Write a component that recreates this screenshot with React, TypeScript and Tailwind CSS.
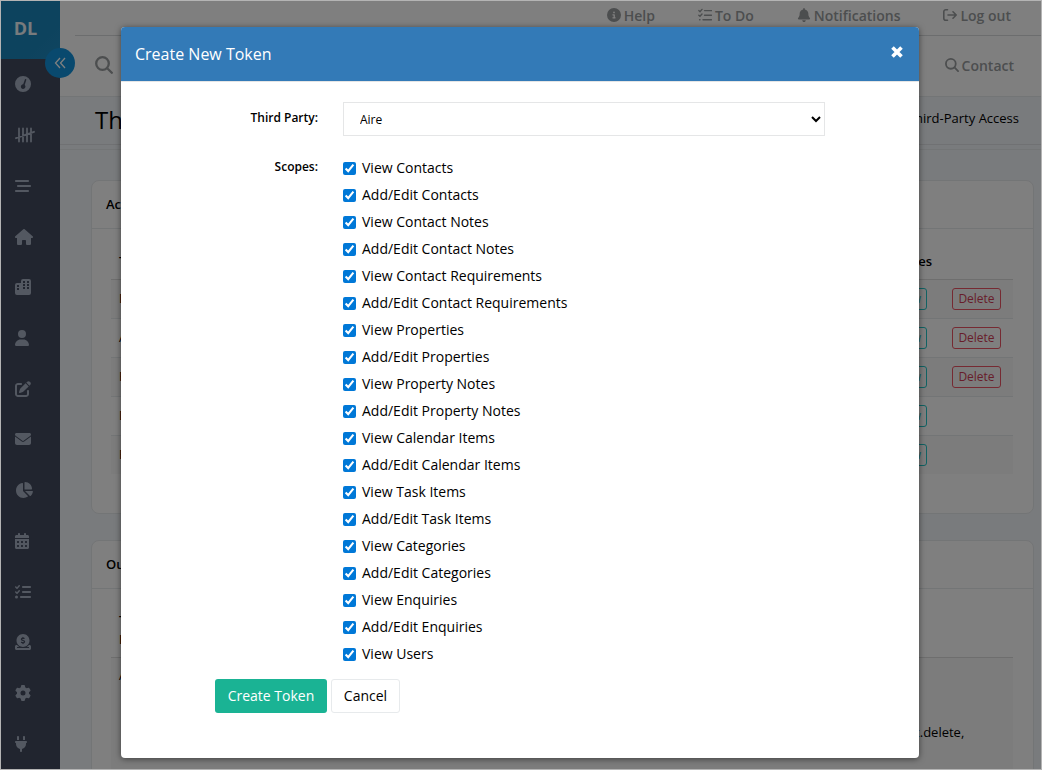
import type { ReactNode } from 'react'
import {
  FaBarsStaggered,
  FaBell,
  FaCalendarDays,
  FaChartPie,
  FaCircleDollarToSlot,
  FaCircleInfo,
  FaEnvelope,
  FaGear,
  FaHouse,
  FaListCheck,
  FaPenToSquare,
  FaPlug,
  FaUser,
} from 'react-icons/fa6'

const scopes = [
  'View Contacts',
  'Add/Edit Contacts',
  'View Contact Notes',
  'Add/Edit Contact Notes',
  'View Contact Requirements',
  'Add/Edit Contact Requirements',
  'View Properties',
  'Add/Edit Properties',
  'View Property Notes',
  'Add/Edit Property Notes',
  'View Calendar Items',
  'Add/Edit Calendar Items',
  'View Task Items',
  'Add/Edit Task Items',
  'View Categories',
  'Add/Edit Categories',
  'View Enquiries',
  'Add/Edit Enquiries',
  'View Users',
]

const tokens = [
  { name: 'Domain', removable: true },
  { name: 'Aire', removable: true },
  { name: 'Reapit', removable: true },
  { name: 'Domus', removable: false },
  { name: 'Ree', removable: false },
]

function GaugeIcon() {
  return (
    <svg viewBox="0 0 16 16" fill="currentColor" className="size-4" aria-hidden="true">
      <path
        fillRule="evenodd"
        d="M8 0a8 8 0 1 1 0 16A8 8 0 0 1 8 0Zm2.9 3.1a.8.8 0 0 0-1 .4L8.2 8.3a2.3 2.3 0 1 0 1.5.6l1.6-4.8a.8.8 0 0 0-.4-1Z"
      />
    </svg>
  )
}

function TallyIcon() {
  return (
    <svg
      viewBox="0 0 20 16"
      fill="none"
      stroke="currentColor"
      strokeWidth="1.8"
      strokeLinecap="round"
      className="h-4 w-5"
      aria-hidden="true"
    >
      <path d="M4 1.5v13M8 1.5v13M12 1.5v13M16 1.5v13M1 11.2l18-6.4" />
    </svg>
  )
}

function BuildingsIcon() {
  return (
    <svg viewBox="0 0 16 16" fill="currentColor" className="size-4" aria-hidden="true">
      <path
        fillRule="evenodd"
        d="M6 2a2 2 0 0 1 2-2h6a2 2 0 0 1 2 2v12a2 2 0 0 1-2 2H2a2 2 0 0 1-2-2V6a2 2 0 0 1 2-2h4ZM8 2v2h2V2Zm4 0v2h2V2ZM8 5v2h2V5Zm4 0v2h2V5ZM2 6v2h2V6Zm6 2v2h2V8Zm4 0v2h2V8ZM2 9v2h2V9Z"
      />
    </svg>
  )
}

function SearchIcon({ className }: { className: string }) {
  return (
    <svg
      viewBox="0 0 18 18"
      fill="none"
      stroke="currentColor"
      strokeWidth="2.3"
      strokeLinecap="round"
      className={className}
      aria-hidden="true"
    >
      <circle cx="7.5" cy="7.5" r="6.3" />
      <path d="m12.2 12.2 4.6 4.6" />
    </svg>
  )
}

function ChecklistIcon() {
  return (
    <svg
      viewBox="0 0 14 14"
      fill="none"
      stroke="currentColor"
      strokeWidth="1.4"
      strokeLinecap="round"
      className="size-3.5"
      aria-hidden="true"
    >
      <path d="m.8 2.6 1.2 1.1L4 1.4M.8 7.2 2 8.3 4 6M6.5 2.6h7M6.5 7.2h7M5 11.8h8.5M1.6 11.8h.4" />
    </svg>
  )
}

function LogoutIcon() {
  return (
    <svg
      viewBox="0 0 14 14"
      fill="none"
      stroke="currentColor"
      strokeWidth="1.6"
      strokeLinecap="round"
      strokeLinejoin="round"
      className="size-3.5"
      aria-hidden="true"
    >
      <path d="M4.5 1.7H2.8a2 2 0 0 0-2 2v6.6a2 2 0 0 0 2 2h1.7M5 7h8.2M10 3.8 13.2 7 10 10.2" />
    </svg>
  )
}

const menu = [
  { label: 'Dashboard', icon: <GaugeIcon /> },
  { label: 'Tally', icon: <TallyIcon /> },
  { label: 'Lists', icon: <FaBarsStaggered /> },
  { label: 'Home', icon: <FaHouse className="w-[18px]" /> },
  { label: 'Properties', icon: <BuildingsIcon /> },
  { label: 'Contacts', icon: <FaUser className="w-3.5" /> },
  { label: 'Edit', icon: <FaPenToSquare /> },
  { label: 'Mail', icon: <FaEnvelope /> },
  { label: 'Reports', icon: <FaChartPie className="w-[18px]" /> },
  { label: 'Calendar', icon: <FaCalendarDays className="w-3.5" /> },
  { label: 'Tasks', icon: <FaListCheck /> },
  { label: 'Payments', icon: <FaCircleDollarToSlot /> },
  { label: 'Settings', icon: <FaGear /> },
  { label: 'Integrations', icon: <FaPlug className="w-3" /> },
]

function Sidebar() {
  return (
    <aside className="relative flex w-[59px] shrink-0 flex-col bg-[#424a5e]">
      <div className="flex h-[58px] shrink-0 items-center bg-linear-to-br from-[#1b87bd] from-70% to-[#2089c0] pr-2.5 pb-1">
        <a href="#home" className="w-full text-center text-[18px] font-bold text-[#f0f6fa]">
          DL
        </a>
      </div>
      <button
        type="button"
        aria-label="Collapse menu"
        className="absolute top-[47px] -right-[15px] z-10 flex size-[30px] items-center justify-center rounded-full bg-[#1293dd] text-white"
      >
        <svg viewBox="0 0 12 12" fill="none" stroke="currentColor" strokeWidth="1.3" className="size-3" aria-hidden="true">
          <path d="M6 1 1.5 6 6 11M11 1 6.5 6l4.5 5" />
        </svg>
      </button>
      <nav className="flex-1">
        <ul className="flex h-full flex-col">
          {menu.map((item) => (
            <li key={item.label} className="flex-1">
              <a
                href="#menu"
                aria-label={item.label}
                className="flex h-full items-center pl-3.5 text-base text-[#a7b1c2]"
              >
                {item.icon}
              </a>
            </li>
          ))}
        </ul>
      </nav>
    </aside>
  )
}

function TopLink({ icon, children }: { icon: ReactNode; children: ReactNode }) {
  return (
    <a href="#top" className="flex items-center gap-[3px] text-[14px] font-semibold text-[#999c9e]">
      {icon}
      {children}
    </a>
  )
}

function Panel({ title, children }: { title: string; children: ReactNode }) {
  return (
    <section className="rounded-lg border border-[#e7eaec] bg-white">
      <h2 className="flex h-12 items-center border-b border-[#e7eaec] px-3.5 text-[13px] font-semibold">{title}</h2>
      <div className="pt-3.5 pr-5 pb-[39px] pl-[19px]">{children}</div>
    </section>
  )
}

function TokenTable() {
  return (
    <table className="w-full table-fixed text-left text-[13px]">
      <thead>
        <tr className="h-9 border-b border-[#ddd]">
          <th className="px-2 pt-0.5 font-semibold">Third Party</th>
          <th className="w-[67px] pt-0.5 pr-3 text-right font-semibold">Scopes</th>
          <th className="w-[69px]" aria-label="Actions" />
        </tr>
      </thead>
      <tbody>
        {tokens.map((token) => (
          <tr key={token.name} className="h-[39px] border-b border-[#e7eaec] last:border-0 odd:bg-[#f9f9f9]">
            <td className="px-2">{token.name}</td>
            <td className="px-2">
              <button
                type="button"
                className="flex h-[22px] w-[42px] items-center justify-end rounded-[3px] border border-[#23c6c8] pr-[5px] text-[12px] text-[#23c6c8]"
              >
                View
              </button>
            </td>
            <td className="px-2">
              {token.removable && (
                <button
                  type="button"
                  className="flex h-[22px] w-[49px] items-center justify-center rounded-[3px] border border-[#ed5565] text-[12px] text-[#d03c55]"
                >
                  Delete
                </button>
              )}
            </td>
          </tr>
        ))}
      </tbody>
    </table>
  )
}

function OutboundTable() {
  return (
    <table className="w-full table-fixed text-left text-[13px] leading-[19px]">
      <thead>
        <tr className="border-b border-[#ddd]">
          <th className="px-2 pt-2 pb-2 font-semibold">
            Third Party
            <br />
            ID
          </th>
          <th className="w-[138px]" aria-label="Scopes" />
        </tr>
      </thead>
      <tbody>
        <tr className="border-b border-[#ddd] bg-[#f9f9f9] align-top">
          <td className="px-2 py-2">Aire</td>
          <td className="py-2 pr-2">
            view,
            <br />
            add,
            <br />
            edit,
            <br />
            contact.delete,
            <br />
            &nbsp;
          </td>
        </tr>
      </tbody>
    </table>
  )
}

function Page() {
  return (
    <div className="flex h-full">
      <Sidebar />
      <main className="min-w-0 flex-1 overflow-hidden bg-[#f3f6fa]">
        <header className="h-24 border-b border-[#e7eaec] bg-white">
          <div className="ml-[15px] flex h-[35px] items-center justify-end gap-[43px] border-b border-[#d8dadc] pr-[30px] pb-1.5">
            <TopLink icon={<FaCircleInfo />}>Help</TopLink>
            <TopLink icon={<ChecklistIcon />}>To Do</TopLink>
            <TopLink icon={<FaBell />}>Notifications</TopLink>
            <TopLink icon={<LogoutIcon />}>Log out</TopLink>
          </div>
          <div className="flex h-[60px] items-center justify-between pr-[27px] pb-0.5 pl-[35px]">
            <button type="button" aria-label="Search" className="text-[#999c9e]">
              <SearchIcon className="size-[18px]" />
            </button>
            <TopLink icon={<SearchIcon className="size-3.5" />}>Contact</TopLink>
          </div>
        </header>
        <div className="flex h-12 items-center justify-between border-b border-[#e0e3e7] pr-[22px] pb-0.5 pl-[35px]">
          <h1 className="text-[24px] font-medium">Third Party</h1>
          <span className="pb-0.5 text-[13px]">Third-Party Access</span>
        </div>
        <div className="mt-1 border-t border-[#e7eaec]" />
        <div className="flex flex-col gap-[26px] pt-[30px] pr-[7px] pl-[31px]">
          <Panel title="Access Tokens">
            <TokenTable />
          </Panel>
          <Panel title="Outbound Access">
            <OutboundTable />
          </Panel>
        </div>
      </main>
    </div>
  )
}

function CreateTokenDialog() {
  return (
    <div
      role="dialog"
      aria-modal="true"
      aria-labelledby="dialog-title"
      className="mx-auto w-full max-w-[798px] overflow-hidden rounded-sm bg-white shadow-[0_1px_6px_rgba(0,0,0,0.5)]"
    >
      <div className="flex h-[55px] items-center justify-between border-b border-[#e5e5e5] bg-[#337ab7] pr-4 pl-3.5 text-white">
        <h2 id="dialog-title" className="text-[16px]">
          Create New Token
        </h2>
        <button type="button" aria-label="Close" className="pb-1">
          <svg viewBox="0 0 12 12" fill="none" stroke="currentColor" strokeWidth="3.6" className="size-3" aria-hidden="true">
            <path d="m1.5 1.5 9 9M10.5 1.5l-9 9" />
          </svg>
        </button>
      </div>
      <form className="px-[15px] pt-5 pb-[45px]" onSubmit={(e) => e.preventDefault()}>
        <div className="flex">
          <label htmlFor="third-party" className="w-[182px] pt-[7px] text-right text-[12px] leading-[18px] font-semibold">
            Third Party:
          </label>
          <select
            id="third-party"
            className="ml-[25px] h-[34px] w-[482px] border border-[#e5e6e7] bg-white px-3 text-[12px]"
          >
            <option>Aire</option>
          </select>
        </div>
        <fieldset className="mt-[18px] flex">
          <legend className="float-left w-[182px] pt-1 text-right text-[12px] leading-[18px] font-semibold">Scopes:</legend>
          <ul className="ml-[25px]">
            {scopes.map((scope) => (
              <li key={scope}>
                <label className="flex h-[27px] items-center gap-1.5 text-[14px]">
                  <input type="checkbox" defaultChecked className="mt-0.5 size-[13px] accent-[#0078d7]" />
                  {scope}
                </label>
              </li>
            ))}
          </ul>
        </fieldset>
        <div className="mt-3 flex gap-1 pl-[79px] text-[14px]">
          <button type="submit" className="h-[34px] w-28 rounded-[3px] bg-[#1ab394] pb-0.5 font-medium text-white">
            Create Token
          </button>
          <button type="button" className="h-[34px] w-[69px] rounded-[3px] border border-[#e7eaec] pb-0.5">
            Cancel
          </button>
        </div>
      </form>
    </div>
  )
}

export default function App() {
  return (
    <div className="relative h-screen overflow-hidden border border-[#b4b4b4] font-['Open_Sans','Noto_Sans',sans-serif] text-black">
      <Page />
      <div className="absolute inset-0 z-20 overflow-hidden bg-black/50 pt-[26px] pr-0.5">
        <CreateTokenDialog />
      </div>
    </div>
  )
}
